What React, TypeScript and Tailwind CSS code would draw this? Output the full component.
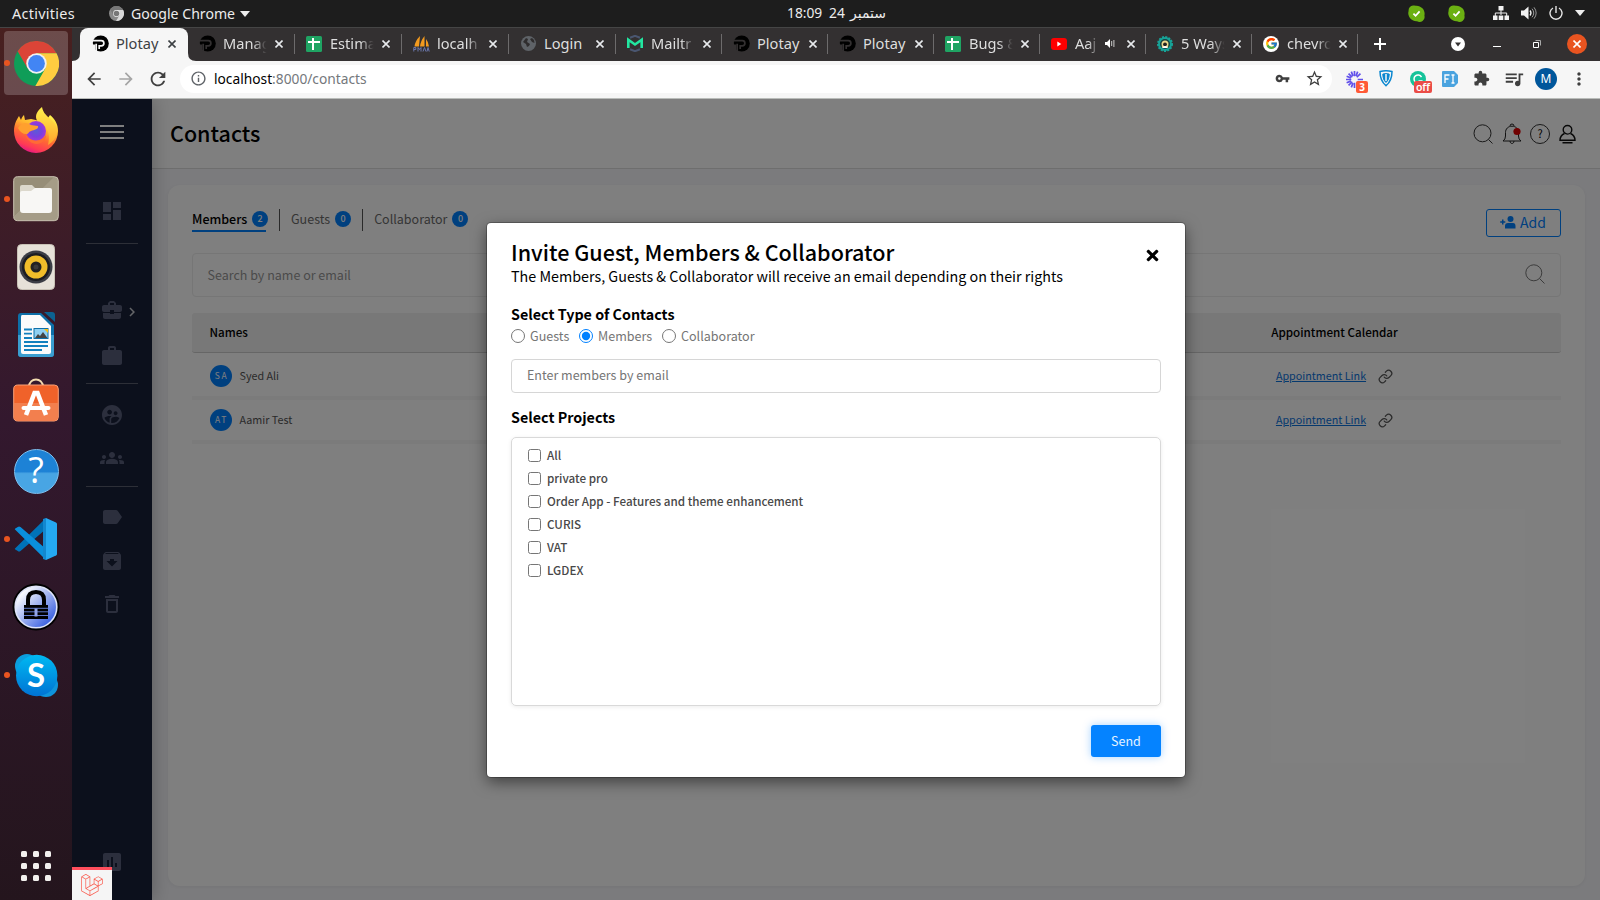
import type { ReactNode } from "react";
import {
  MdArchive, MdArrowBack, MdArrowForward, MdAssessment, MdBusinessCenter, MdChevronRight, MdDashboard,
  MdDeleteOutline, MdExtension, MdGroups, MdInfoOutline, MdLabel, MdMoreVert, MdQueueMusic, MdRefresh,
  MdStarBorder, MdSupervisedUserCircle, MdVpnKey, MdWork,
} from "react-icons/md";
import { FaLaravel, FaTimes } from "react-icons/fa";
import { FcGoogle } from "react-icons/fc";
import { Link as LinkIcon } from "lucide-react";

/* ---------- desktop top bar ---------- */

const ChromeMark = ({ mono = false, size }: { mono?: boolean; size: number }) => (
  <svg width={size} height={size} viewBox="-22 -22 44 44" className="shrink-0">
    <circle r="22" fill={mono ? "#8a8a8a" : "#0f9d58"} />
    <path d="M19.6-10H0V0L-8.66 5-18.46-11.97A22 22 0 0 1 19.6-10Z" fill={mono ? "#777" : "#db4437"} />
    <path d="M19.6-10H0V0L8.66 5-1.14 21.97A22 22 0 0 0 19.6-10Z" fill={mono ? "#d8d8d8" : "#ffcd40"} />
    <circle r="10" fill={mono ? "#eee" : "#f1f1f1"} />
    <circle r="8.2" fill={mono ? "#777" : "#4285f4"} />
  </svg>
);

const SkypeStatus = () => (
  <svg width="17" height="17" viewBox="0 0 17 17">
    <path d="M5 .5A5 5 0 0 0 .6 6 8 8 0 0 0 9 16.2a5 5 0 0 0 7.4-5.6A8 8 0 0 0 8 .8 5 5 0 0 0 5 .5Z" fill="#6bb012" />
    <path d="m5.400 8.600 2.200 2.200 4-4.400" fill="none" stroke="#fff" strokeWidth="1.8" />
  </svg>
);

const TopBar = () => (
  <div className="flex h-7 shrink-0 items-center border-b border-[#454545] bg-[#1d1d1d] text-[14.4px] leading-[26px] text-[#ececec]">
    <div className="w-[109px] pl-3 tracking-[0.02em]">Activities</div>
    <ChromeMark mono size={15} />
    <div className="ml-[7px] w-[104px] whitespace-nowrap text-[14.1px]">Google Chrome</div>
    <svg width="10" height="6" className="ml-[5px]"><path d="M0 0h10L5 6Z" fill="#eee" /></svg>
    <div className="ml-[537px] flex items-baseline pb-px text-[13.8px]">
      <span className="w-[42px]">18:09</span>
      <span className="w-[21px]">24</span>
      <span className="font-['DejaVu_Sans'] text-[14px] leading-[20px]" dir="rtl">ستمبر</span>
    </div>
    <div className="flex-1" />
    <div className="flex w-[192px] items-center pb-px">
      <SkypeStatus />
      <span className="w-[23px]" />
      <SkypeStatus />
      <svg width="16" height="14" viewBox="0 0 16 14" className="ml-[28px]" fill="#f2f2f2">
        <path d="M5.500 0h5v4.500h-5zM0 9.500h4.500V14H0zM5.700 9.500h4.600V14H5.700zM11.500 9.500H16V14h-4.500z" />
        <path d="M8 4v5M2.300 10V7h11.400v3" fill="none" stroke="#f2f2f2" />
      </svg>
      <svg width="16" height="14" viewBox="0 0 16 14" className="ml-[12px]" fill="none" stroke="#f2f2f2">
        <path d="M0 4.500h3L7.500.500v13L3 9.500H0Z" fill="#f2f2f2" stroke="none" />
        <path d="M9 4.500q2 2.500 0 5" strokeWidth="1.300" />
        <path d="M11 2.700q3.500 4.300 0 8.600M13 1.300q4.300 5.700 0 11.400" stroke="#9a9a9a" />
      </svg>
      <svg width="14" height="14" viewBox="0 0 14 14" className="ml-[12px]" fill="none" stroke="#e6e6e6" strokeWidth="1.400">
        <path d="M4 2a6 6 0 1 0 6 0M7 0v7" />
      </svg>
      <svg width="10" height="6" className="ml-[12px]"><path d="M0 0h10L5 6Z" fill="#eee" /></svg>
    </div>
  </div>
);

/* ---------- dock ---------- */

const Firefox = () => (
  <svg width="46" height="48" viewBox="0 0 46 48" className="mb-[2px]">
    <defs>
      <linearGradient id="ffa" x1=".8" y1="0" x2=".35" y2="1">
        <stop offset="0" stopColor="#fff44f" /><stop offset=".35" stopColor="#ffb92e" /><stop offset=".6" stopColor="#ff6a33" /><stop offset=".85" stopColor="#ff3a55" /><stop offset="1" stopColor="#e31587" />
      </linearGradient>
      <radialGradient id="ffb"><stop offset="0" stopColor="#5b5bd6" /><stop offset=".6" stopColor="#7a3fe0" /><stop offset="1" stopColor="#a338d8" /></radialGradient>
      <linearGradient id="ffc" x1="0" y1="0" x2="0" y2="1"><stop offset="0" stopColor="#fff04d" /><stop offset="1" stopColor="#ffa42b" /></linearGradient>
    </defs>
    <path d="M1 25C1 18 4 13 6 10l2 4c1-3 2-4 3-5l1 5 6-1 14 3 5-7c5 4 8 9 8 16A22 22 0 0 1 1 25Z" fill="url(#ffa)" />
    <path d="M29 1c1 5 3 7 7 11 4 3 9 8 8 15-1 5-4 9-9 12 2-8 1-15-4-19-8-3-12-11-2-19Z" fill="url(#ffc)" />
    <circle cx="23" cy="25" r="10" fill="url(#ffb)" />
    <path d="M5 22c4-6 9-6 13-3l7 1c1 3-4 4-7 5s-3 4-5 3c-3 0-6-2-8-6Z" fill="#ffa02e" />
    <path d="M12 28c4 8 16 9 21 1 0 10-16 14-21-1Z" fill="#ff6b35" />
  </svg>
);

const Files = () => (
  <svg width="46" height="46" viewBox="0 0 46 46">
    <defs><linearGradient id="fla" x1="0" y1="0" x2="1" y2="1"><stop offset=".45" stopColor="#978e78" /><stop offset=".46" stopColor="#a59c87" /></linearGradient></defs>
    <rect x=".7" y=".7" width="44.600" height="44" rx="4" fill="url(#fla)" stroke="#c9c2b0" strokeWidth="1" />
    <path d="M7 11q0-2 2-2h10l3 3v6H7Z" fill="#dcd8cc" />
    <path d="M7 17q0-2 2-2h9l4-3h15q2 0 2 2v20q0 3-3 3H10q-3 0-3-3Z" fill="#f8f7f5" />
  </svg>
);

const Rhythmbox = () => (
  <svg width="38" height="46" viewBox="0 0 38 46">
    <rect x=".5" y=".5" width="37" height="45" rx="4" fill="#e6e1d8" stroke="#c8c2b6" />
    <circle cx="19" cy="23" r="16.500" fill="#3b3d45" /><circle cx="19" cy="23" r="14" fill="#1c1d22" />
    <circle cx="19" cy="23" r="11.500" fill="#f0bd2a" /><circle cx="19" cy="23" r="5.500" fill="#222" />
    <circle cx="19" cy="23" r="2.500" fill="#3a3a3a" />
  </svg>
);

const Writer = () => (
  <svg width="38" height="46" viewBox="0 0 38 46">
    <path d="M4 1h20l13 12v29q0 3-3 3H4q-3 0-3-3V4q0-3 3-3Z" fill="#0d6fa8" />
    <path d="M1 23h36v19q0 3-3 3H4q-3 0-3-3Z" fill="#3a9ed0" />
    <path d="M27 0h8q3 0 3 3v7Z" fill="#0c6291" />
    <path d="M5 3h18l11 11v26q0 2-2 2H6q-2 0-2-2V5q0-2 1-2Z" fill="#fbfbfb" />
    <path d="M7 17.500h8M7 21.700h8M7 26h8M7 30h24M7 34h24M7 38h18" stroke="#1280be" strokeWidth="1.800" />
    <rect x="17" y="16.500" width="14" height="10" fill="#8fd0f2" stroke="#0d6fa8" />
    <path d="m18 26 3-4 2 2 3-4 4.500 6Z" fill="#444" /><path d="M27 17h4v4Z" fill="#f5c211" />
  </svg>
);

const Software = () => (
  <svg width="46" height="44" viewBox="0 0 46 44" className="mb-[6px]">
    <path d="M16 9c0-10 14-10 14 0" fill="none" stroke="#f3dcb0" strokeWidth="2" />
    <rect x=".7" y="7" width="44.600" height="36" rx="4" fill="#f0622a" stroke="#f9a077" />
    <path d="M1 25h44v14q0 3.500-3.500 3.500h-37Q1 42.500 1 39Z" fill="#f37f4e" />
    <path d="m13 37 8.500-22h3L33 37" fill="none" stroke="#fff" strokeWidth="4.500" />
    <path d="M10.500 30h25" stroke="#fff" strokeWidth="4" strokeLinecap="round" />
  </svg>
);

const Help = () => (
  <div className="flex size-[45px] items-center justify-center rounded-full border border-[#7cc0f0] bg-linear-to-b from-[#1d82d6] from-50% to-[#48a5e4] to-55% pb-[2px] font-['Open_Sans'] text-[36px] leading-none text-white">
    ?
  </div>
);

const VsCode = () => (
  <svg width="44" height="44" viewBox="0 0 44 44">
    <path d="M1 31.500 32 1v11L6.500 34Q5 35 3.800 34L1.300 32.500Q.4 32 1 31.500Z" fill="#0072b8" />
    <path d="M1 12.500 32 43V32L6.500 10Q5 9 3.800 10L1.300 11.600Q.4 12 1 12.500Z" fill="#0a8fdc" />
    <path d="m32 1 10 4.500q1 .5 1 1.500v30q0 1-1 1.500L32 43Z" fill="#25a9f2" />
    <path d="m32 1-3 1v40l3 1Z" fill="#1387cf" />
  </svg>
);

const KeePass = () => (
  <svg width="48" height="48" viewBox="0 0 48 48">
    <defs><linearGradient id="kp" x1="0" y1="0" x2="1" y2="1"><stop offset=".15" stopColor="#fff" /><stop offset=".85" stopColor="#3c62e0" /></linearGradient></defs>
    <circle cx="24" cy="24" r="23.500" fill="#000" /><circle cx="24" cy="24" r="20.800" fill="url(#kp)" stroke="#dfe4f8" strokeWidth="1.600" />
    <path d="M16 22v-5q0-8 8-8t8 8v5" fill="none" stroke="#000" strokeWidth="4" />
    <path d="M12 22h24v14H12z" fill="#000" />
    <path d="M12 25.300h24M12 28.800h24M12 32.500h24" stroke="#6b86e0" strokeWidth=".9" /><path d="M22.500 25.500h3v8h-3z" fill="#93a5e8" />
  </svg>
);

const Skype = () => (
  <div className="relative flex size-[43px] items-center justify-center">
    <svg width="43" height="43" viewBox="0 0 43 43" className="absolute inset-0">
      <defs><linearGradient id="sk" x1="0" y1="0" x2="0" y2="1"><stop offset="0" stopColor="#00b9f2" /><stop offset="1" stopColor="#0073d4" /></linearGradient></defs>
      <circle cx="12" cy="12" r="12" fill="#0b9ddd" /><circle cx="31" cy="31" r="12" fill="#0e94dc" />
      <circle cx="21.700" cy="21.500" r="20.700" fill="url(#sk)" />
    </svg>
    <span className="relative pb-[2px] font-['Lato'] text-[33px] leading-none font-bold text-white">S</span>
  </div>
);

const AppsGrid = () => (
  <div className="grid grid-cols-3 gap-[6px]">
    {Array.from({ length: 9 }, (_, i) => <span key={i} className="size-[6px] rounded-[1.5px] bg-[#f2f0ee]" />)}
  </div>
);

const dockItems: { icon: ReactNode; running?: boolean; active?: boolean }[] = [
  { icon: <ChromeMark size={45} />, running: true, active: true },
  { icon: <Firefox /> },
  { icon: <Files />, running: true },
  { icon: <Rhythmbox /> },
  { icon: <Writer /> },
  { icon: <Software /> },
  { icon: <Help /> },
  { icon: <VsCode />, running: true },
  { icon: <KeePass /> },
  { icon: <Skype />, running: true },
];

const Dock = () => (
  <div className="flex w-[72px] shrink-0 flex-col bg-linear-to-b from-[#48201f] via-[#33182e] via-45% to-[#24151d] pt-px">
    {dockItems.map((d, i) => (
      <div key={i} className="relative flex h-[68px] items-center justify-center">
        <div className={d.active ? "flex h-16 w-16 items-center justify-center rounded-[4px] bg-white/20" : "flex h-16 w-16 items-center justify-center"}>{d.icon}</div>
        {d.running && <span className="absolute top-[31px] left-1 size-[6px] rounded-full bg-[#e95420]" />}
      </div>
    ))}
    <div className="flex flex-1 items-end justify-center pb-[19px]"><AppsGrid /></div>
  </div>
);

/* ---------- browser chrome ---------- */

const PlotayIcon = ({ cut }: { cut: string }) => (
  <svg width="17" height="17" viewBox="0 0 17 17" fill="none">
    <circle cx="8.700" cy="8.500" r="8.100" fill="#000" />
    <path d="M0 5.700h9.300a2.600 2.600 0 0 1 0 5.200H7.200V14M4.200 8.700V17" stroke={cut} strokeWidth="1.700" />
    <path d="M0 6.500V17h3.400V9.500H1.200" fill={cut} />
  </svg>
);
const SheetsIcon = () => (
  <svg width="16" height="16" viewBox="0 0 16 16"><rect width="16" height="16" rx="1.500" fill="#1fa463" /><path d="M2 6h12M7 2v12" stroke="#fff" strokeWidth="2" /></svg>
);
const PmaIcon = () => (
  <svg width="17" height="16" viewBox="0 0 17 16">
    <path d="M7 0Q2 5 1.500 10.500H6ZM11.500 0Q7.500 5 7 10.500h4.500ZM13 3q2.500 3 3 7.500h-3Z" fill="#f29a1f" />
    <path d="M.8 15.500v-4h2v2h-2M5 15.500v-4l1.500 2 1.500-2v4M10 15.500l1.500-4 1.500 4M14 15.500l1-4 1.200 4" fill="none" stroke="#6c78af" strokeWidth="1" />
  </svg>
);
const GlobeIcon = () => (
  <svg width="15" height="15" viewBox="0 0 15 15"><circle cx="7.500" cy="7.500" r="7.500" fill="#5f6368" /><path d="M2 6l3 2 1 3 2-1 1-2-3-2 1-3-2-1ZM9 3l2 3 2.500 1L13 4 11 2Z" fill="#2f2d2e" /></svg>
);
const MailtrapIcon = () => (
  <svg width="16" height="17" viewBox="0 0 16 17" fill="none"><path d="M3 2.800 8 .8l5 2M3 14.200l5 2 5-2" stroke="#4a5670" strokeWidth="2" /><path d="M1.300 13V4.800L8 9.500l6.700-4.700V13" stroke="#22e6a0" strokeWidth="2.600" /></svg>
);
const YoutubeIcon = () => (
  <svg width="16" height="12" viewBox="0 0 16 12"><rect width="16" height="12" rx="3" fill="#f00" /><path d="M6.300 3.500v5l4-2.500Z" fill="#fff" /></svg>
);
const BadgeIcon = () => (
  <svg width="16" height="16" viewBox="0 0 16 16"><circle cx="8" cy="8" r="7" fill="#17a398" stroke="#17a398" strokeWidth="2" strokeDasharray="2 1.3" /><circle cx="8" cy="8" r="5" fill="#173f3f" /><path d="M4.500 8a3.500 3.500 0 0 1 7 0L11 11.500H5Z" fill="#e9d58a" /><circle cx="8" cy="8.300" r="1.900" fill="#222" /><path d="M5.500 11q2.500-2 5 0v1h-5Z" fill="#fff" /></svg>
);
const GoogleIcon = () => <span className="flex size-4 items-center justify-center rounded-full bg-white"><FcGoogle size={13} /></span>;
const Cross = ({ size = 8, color = "#e8eaed" }: { size?: number; color?: string }) => (
  <svg width={size} height={size} viewBox="0 0 8 8"><path d="M.500.500l7 7m0-7-7 7" stroke={color} strokeWidth="1.600" /></svg>
);
const Speaker = () => (
  <svg width="10" height="9" viewBox="0 0 10 9"><path d="M0 3h2l3-3v9L2 6H0Z" fill="#fff" /><path d="M6.700 2v5M8.900 1v7" stroke="#ccc" /></svg>
);

const WHOLE = "ml-[7px] w-[46px] shrink-0 whitespace-nowrap";
const FADED = "ml-[7px] w-[46px] shrink-0 whitespace-nowrap [mask-image:linear-gradient(to_right,black_65%,transparent_95%)]";
const FADED_SHORT = "ml-[7px] w-[24px] shrink-0 whitespace-nowrap [mask-image:linear-gradient(to_right,black_55%,transparent_98%)]";

const tabs: { icon: ReactNode; title: string; text: string; width: string; sound?: boolean }[] = [
  { icon: <PlotayIcon cut="#333031" />, title: "Manag", text: FADED, width: "w-[107px]" },
  { icon: <SheetsIcon />, title: "Estima", text: FADED, width: "w-[107px]" },
  { icon: <PmaIcon />, title: "localh", text: FADED, width: "w-[107px]" },
  { icon: <GlobeIcon />, title: "Login", text: WHOLE, width: "w-[107px]" },
  { icon: <MailtrapIcon />, title: "Mailtr", text: FADED, width: "w-[106px]" },
  { icon: <PlotayIcon cut="#333031" />, title: "Plotay", text: WHOLE, width: "w-[106px]" },
  { icon: <PlotayIcon cut="#333031" />, title: "Plotay", text: WHOLE, width: "w-[106px]" },
  { icon: <SheetsIcon />, title: "Bugs &", text: FADED, width: "w-[106px]" },
  { icon: <YoutubeIcon />, title: "Aaj", text: FADED_SHORT, width: "w-[106px]", sound: true },
  { icon: <BadgeIcon />, title: "5 Ways", text: FADED, width: "w-[106px]" },
  { icon: <GoogleIcon />, title: "chevro", text: FADED, width: "w-[106px]" },
];

const TabStrip = () => (
  <div className="flex h-[33px] shrink-0 items-stretch bg-[#333031] pl-[8px] text-[14.6px] text-[#dedede]">
    <div className="relative flex w-[108px] items-center rounded-t-lg bg-[#f6f6f6] pb-[2px] text-[#3c4043]">
      <svg width="8" height="8" className="absolute bottom-0 -left-2"><path d="M8 0v8H0Q8 8 8 0Z" fill="#f6f6f6" /></svg>
      <svg width="8" height="8" className="absolute -right-2 bottom-0"><path d="M0 0v8h8Q0 8 0 0Z" fill="#f6f6f6" /></svg>
      <div className="ml-[11px] flex w-[18px] justify-center"><PlotayIcon cut="#f6f6f6" /></div>
      <span className="ml-[7px] w-[48px]">Plotay</span>
      <span className="ml-[4px]"><Cross color="#3c4043" /></span>
    </div>
    {tabs.map((t, i) => (
      <div key={i} className={`flex shrink-0 items-center pb-[2px] ${t.width}`}>
        <div className="ml-[10px] flex w-[18px] shrink-0 justify-center">{t.icon}</div>
        <div className={t.text}>{t.title}</div>
        {t.sound && <div className="ml-[6px] w-[16px] shrink-0"><Speaker /></div>}
        <div className="ml-[6px] flex flex-1"><Cross /></div>
        <span className="h-5 w-px bg-[#6d6b6c]" />
      </div>
    ))}
    <div className="flex flex-1 items-center pb-[2px]">
      <svg width="12" height="12" className="ml-[16px]"><path d="M6 0v12M0 6h12" stroke="#fff" strokeWidth="2" /></svg>
      <svg width="14" height="14" className="ml-[65px]"><circle cx="7" cy="7" r="7" fill="#fff" /><path d="M4 5.500h6L7 9.500Z" fill="#333031" /></svg>
      <span className="mt-[5px] ml-[28px] h-px w-[8px] bg-white" />
      <svg width="8" height="8" className="ml-[32px]" fill="none"><path d="M2.500 .5h5v5" stroke="#aaa" /><path d="M.5 2.500h5v5h-5z" stroke="#fff" /></svg>
      <span className="ml-[26px] flex size-5 items-center justify-center rounded-full bg-[#e95420]"><Cross color="#fff" /></span>
    </div>
  </div>
);

const Toolbar = () => (
  <div className="flex h-[38px] shrink-0 items-center border-b border-[#b9bcb9] bg-[#f6f6f6] pb-[2px] text-[#3f3f3f]">
    <MdArrowBack size={20} className="ml-[12px]" />
    <MdArrowForward size={20} className="ml-[12px] text-[#a5a5a5]" />
    <MdRefresh size={22} className="ml-[11px]" />
    <div className="ml-[11px] flex h-7 w-[1152px] items-center rounded-full bg-white">
      <MdInfoOutline size={17} className="ml-[10px] text-[#5f6368]" />
      <div className="ml-[7px] flex-1 text-[13.75px] leading-7 text-[#74787c]"><span className="text-black">localhost</span>:8000/contacts</div>
      <MdVpnKey size={15} /><MdStarBorder size={19} className="mr-[8px] ml-[15px]" />
    </div>
    <div className="relative ml-[14px] size-4">
      <svg width="17" height="17" viewBox="-8 -8 16 16"><path d="M0-8v5M0 8V3M-8 0h5M8 0H3M-5.600-5.600l3.500 3.500M5.600 5.600 2.100 2.100M5.600-5.600 2.100-2.100M-5.600 5.600l3.500-3.500M-3-7.400l1.500 4M3-7.400l-1.500 4M-7.400-3l4 1.500M-7.400 3l4-1.500M-3 7.400l1.500-4" stroke="#6150ea" strokeWidth="1.600" /></svg>
      <span className="absolute top-[10px] left-[10px] flex h-3 w-3 items-center justify-center rounded-[2px] bg-[#ff5a36] text-[10px] leading-3 font-bold text-white">3</span>
    </div>
    <svg width="14" height="17" viewBox="0 0 14 17" className="ml-[17px]" fill="none" stroke="#0a87d0"><path d="M1 1.500q6-1.500 12 0c0 7-2 11-6 14.200C3 12.500 1 8.500 1 1.500Z" strokeWidth="1.500" /><path d="M3.800 4q3.200-.8 6.400 0c0 4-1 6.500-3.200 8.500C4.800 10.500 3.800 8 3.800 4Z" fill="#0a87d0" /><path d="M7 4v7" stroke="#f6f6f6" strokeWidth="1.500" /></svg>
    <div className="relative ml-[17px] size-4">
      <svg width="16" height="16" viewBox="0 0 16 16"><circle cx="8" cy="8" r="8" fill="#15c39a" /><path d="M11.500 6a4 4 0 1 0 0 4H8.500" fill="none" stroke="#fff" strokeWidth="1.500" /></svg>
      <span className="absolute top-[10px] left-[4px] flex h-3 w-[18px] items-center justify-center rounded-[2px] bg-[#ea4c46] text-[10.5px] leading-3 font-semibold text-white">off</span>
    </div>
    <svg width="16" height="16" viewBox="0 0 16 16" className="ml-[16px]"><path d="M1 0h11l4 4v8l-4 4H1q-1 0-1-1V1q0-1 1-1Z" fill="#4aa3df" /><path d="M3 12V4h4.500M3 8h3.500M9.500 4h3M9.500 12h3M11 4v8" stroke="#fff" strokeWidth="1.300" fill="none" /></svg>
    <MdExtension size={17} className="ml-[15px]" />
    <MdQueueMusic size={22} className="ml-[13px]" />
    <span className="ml-[10px] flex size-[22px] items-center justify-center rounded-full bg-[#00569b] text-[12px] text-white">M</span>
    <MdMoreVert size={20} className="ml-[12px]" />
  </div>
);

/* ---------- application ---------- */

const SideIcon = ({ children, className }: { children: ReactNode; className: string }) => (
  <div className={`relative flex h-6 items-center justify-center text-[#585f7b] ${className}`}>{children}</div>
);

const Sidebar = () => (
  <div className="z-10 w-20 shrink-0 bg-[#182038] pt-[26px] shadow-[0_0_18px_rgba(0,0,0,0.28)]">
    <div className="mx-auto flex h-[14px] w-6 flex-col justify-between"><i className="h-0.5 bg-white" /><i className="h-0.5 bg-white" /><i className="h-0.5 bg-white" /></div>
    <SideIcon className="mt-[60px]"><MdDashboard size={24} /></SideIcon>
    <div className="mx-[14px] mt-[20px] h-px bg-[#5b5f6e]" />
    <SideIcon className="mt-[54px]"><MdBusinessCenter size={24} /><MdChevronRight size={18} className="absolute top-[5px] right-[11px] text-[#c8cad0]" /></SideIcon>
    <SideIcon className="mt-[22px]"><MdWork size={24} /></SideIcon>
    <div className="mx-[14px] mt-[15px] h-px bg-[#5b5f6e]" />
    <SideIcon className="mt-[19px]"><MdSupervisedUserCircle size={24} /></SideIcon>
    <SideIcon className="mt-[19px]"><MdGroups size={24} /></SideIcon>
    <div className="mx-[14px] mt-[16px] h-px bg-[#5b5f6e]" />
    <SideIcon className="mt-[18px]"><MdLabel size={24} /></SideIcon>
    <SideIcon className="mt-[20px]"><MdArchive size={24} /></SideIcon>
    <SideIcon className="mt-[19px]"><MdDeleteOutline size={24} /></SideIcon>
    <SideIcon className="mt-[234px]"><MdAssessment size={24} /></SideIcon>
  </div>
);

const Count = ({ n }: { n: number }) => (
  <span className="flex size-4 shrink-0 items-center justify-center rounded-full bg-[#0080ff] text-[9px] leading-4 font-medium text-white">{n}</span>
);

const Header = () => (
  <div className="flex h-[70px] shrink-0 items-center border-b border-[#dcdcdc] bg-white pr-[24px] pl-[18px]">
    <h1 className="flex-1 pb-px text-[21.5px] leading-7 font-medium text-black">Contacts</h1>
    <svg width="20" height="20" viewBox="0 0 20 20" fill="none" stroke="#333" className="mr-[9px]"><circle cx="9.500" cy="9.300" r="8.500" /><path d="m15.500 15.500 4 4" /></svg>
    <svg width="20" height="22" viewBox="0 0 20 22" fill="none" stroke="#222" className="mr-[8px]"><path d="M8 3a2 2 0 0 1 4 0M1 18h18q-2.500-1.500-2.500-5V9.500C16.500 6 14 3.200 10 3.200S3.500 6 3.500 9.500V13q0 3.500-2.500 5ZM8 18c0 3.300 4 3.300 4 0" /><circle cx="15" cy="8.500" r="3.600" fill="#e00000" stroke="none" /></svg>
    <span className="mr-[9px] flex size-5 items-center justify-center rounded-full border border-[#333] text-[11px] leading-none text-black">?</span>
    <svg width="17" height="20" viewBox="0 0 17 20" fill="none" stroke="#111" strokeWidth="1.400"><circle cx="8.500" cy="5.800" r="4.300" /><path d="M5.500 9.500Q1 11.500 1 16.300h15q0-4.800-4.500-6.800M3.500 18.800h10" /></svg>
  </div>
);

const people = [
  { initials: "SA", name: "Syed Ali", row: "h-[47px] pt-[3px]" },
  { initials: "AT", name: "Aamir Test", row: "h-[44px]" },
];

const ContactsCard = () => (
  <div className="mx-4 mt-4 h-[701px] rounded-xl bg-white px-6 shadow-[0_1px_4px_rgba(0,0,0,0.06)] [margin-right:15px]">
    <div className="flex h-[68px] items-start pt-[22px] text-[12.5px] leading-[23px] text-[#6b6b6b]">
      <div className="flex w-[74px] items-center gap-[4px] border-b-2 border-[#0080ff] font-medium whitespace-nowrap text-black"><span className="w-[56px] shrink-0">Members</span><Count n={2} /></div>
      <span className="mt-[2px] ml-[13px] h-[22px] w-px bg-[#555]" />
      <div className="ml-[11px] flex items-center gap-[5px]">Guests <Count n={0} /></div>
      <span className="mt-[2px] ml-[11px] h-[22px] w-px bg-[#555]" />
      <div className="ml-[11px] flex items-center gap-[5px]">Collaborator <Count n={0} /></div>
      <div className="flex-1" />
      <div className="mt-[2px] flex h-7 w-[75px] items-center justify-center gap-[4px] rounded-[3px] border border-[#0080ff] pr-px pb-px text-[14px] text-[#0080ff]">
        <svg width="16" height="13" viewBox="0 0 16 13" fill="#0080ff"><circle cx="10.500" cy="3" r="3" /><path d="M5 12.500V10q0-3 3-3h5q2.500 0 2.500 3v2.500ZM2 3.500h1.500V5.200H5.300V6.700H3.500V8.500H2V6.700H.2V5.200H2Z" /></svg>
        Add
      </div>
    </div>
    <div className="flex h-11 items-center rounded-[4px] border border-[#ececec] pr-[15px] pl-[14.5px] text-[12.5px] text-[#969696]">
      <span className="flex-1 pt-px">Search by name or email</span>
      <svg width="20" height="20" viewBox="0 0 20 20" fill="none" stroke="#777" className="-mt-[3px]"><circle cx="8.800" cy="8.800" r="8" /><path d="m14.500 14.500 5 5" /></svg>
    </div>
    <div className="mt-4 flex h-10 items-center rounded-[3px] border-b border-[#cdcdcd] bg-[#f0f0f0] pb-[2px] text-[11.65px] font-medium text-black">
      <div className="flex-1 pl-[17.5px]">Names</div>
      <div className="w-[453px] text-center">Appointment Calendar</div>
    </div>
    {people.map((p) => (
      <div key={p.name} className={`flex items-center border-b-4 border-[#f7f7f7] text-[10.75px] text-[#555] ${p.row}`}>
        <div className="flex flex-1 items-center gap-[7.5px] pl-[18px]">
          <span className="flex size-[22px] items-center justify-center rounded-full bg-[#0080ff] pb-px pl-px text-[8.5px] tracking-[1.6px] text-white">{p.initials}</span>
          {p.name}
        </div>
        <div className="flex w-[453px] items-center justify-center gap-[12px]">
          <a className="text-[#0b72dc] underline">Appointment Link</a>
          <LinkIcon size={15} strokeWidth={2} color="#555" />
        </div>
      </div>
    ))}
  </div>
);

const projects = ["All", "private pro", "Order App - Features and theme enhancement", "CURIS", "VAT", "LGDEX"];

const Radio = ({ label, checked, className }: { label: string; checked?: boolean; className: string }) => (
  <label className={`flex items-center gap-[5px] ${className}`}>
    <input type="radio" readOnly checked={!!checked} className="m-0 size-[14px] accent-[#0080ff]" />
    {label}
  </label>
);

const InviteDialog = () => (
  <div className="absolute top-[124px] left-[415px] flex h-[554px] w-[698px] flex-col rounded-[4px] bg-white px-6 pt-4 text-black shadow-[0_0_0_1px_rgba(0,0,0,0.25),0_5px_15px_rgba(0,0,0,0.5)]">
    <div className="flex">
      <h2 className="flex-1 text-[21.55px] leading-[26px] font-medium">Invite Guest, Members &amp; Collaborator</h2>
      <FaTimes size={17} className="mt-[8px]" />
    </div>
    <p className="text-[14.32px] leading-[22px]">The Members, Guests &amp; Collaborator will receive an email depending on their rights</p>
    <h3 className="mt-[17px] text-[14.3px] leading-5 font-bold">Select Type of Contacts</h3>
    <div className="mt-[2px] flex h-5 items-center text-[12.55px] leading-5 text-[#757575]">
      <Radio label="Guests" className="w-[68px]" />
      <Radio label="Members" checked className="w-[83px]" />
      <Radio label="Collaborator" className="" />
    </div>
    <div className="mt-[13px] h-[34px] rounded-[4px] border border-[#d6d6d6] pl-[15px] text-[12.5px] leading-[30px] text-[#757575]">Enter members by email</div>
    <h3 className="mt-[14px] text-[14.3px] leading-5 font-bold">Select Projects</h3>
    <div className="mt-[10px] h-[269px] rounded-[5px] border border-[#d9d9d9] pt-[6px] pl-[16px] shadow-[0_1px_4px_rgba(0,0,0,0.08)]">
      {projects.map((p) => (
        <label key={p} className="flex h-[23px] items-center gap-[6px] text-[11.67px] leading-[22px] font-medium text-[#484848]">
          <input type="checkbox" readOnly checked={false} className="m-0 size-[13px]" />
          <span className="pb-px">{p}</span>
        </label>
      ))}
    </div>
    <button className="mt-[19px] h-8 w-[70px] self-end rounded-[3px] bg-[#0583ff] text-[12.5px] leading-8 text-[#e6f3ff] shadow-[0_0_8px_rgba(0,128,255,0.35)]">Send</button>
  </div>
);

const AppPage = () => (
  <div className="relative flex flex-1 overflow-hidden font-['Noto_Sans_CJK_SC',sans-serif]">
    <Sidebar />
    <div className="flex flex-1 flex-col bg-[#f7f7fb]">
      <Header />
      <ContactsCard />
    </div>
    <div className="absolute inset-0 z-20 bg-black/50">
      <InviteDialog />
      <div className="absolute bottom-0 left-0 flex h-[33px] w-10 items-center justify-center border-t-[3px] border-[#ff4e5c] bg-[#f5f5f5] pr-px text-[#f9584b]">
        <FaLaravel size={22} />
      </div>
    </div>
  </div>
);

export default function App() {
  return (
    <div className="flex h-[900px] w-[1600px] flex-col overflow-hidden font-['Noto_Sans',sans-serif]">
      <TopBar />
      <div className="flex min-h-0 flex-1">
        <Dock />
        <div className="flex min-w-0 flex-1 flex-col">
          <TabStrip />
          <Toolbar />
          <AppPage />
        </div>
      </div>
    </div>
  );
}
